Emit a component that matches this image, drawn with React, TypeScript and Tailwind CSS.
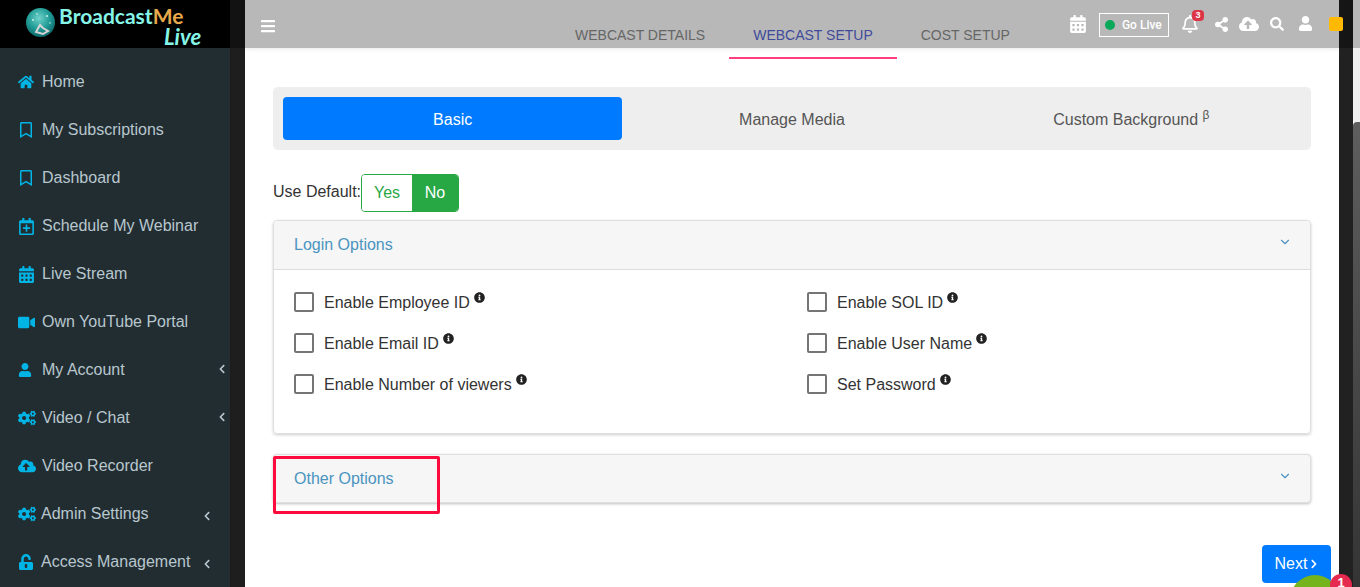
import React from "react";
import {
  FaHome, FaRegBookmark, FaRegCalendarPlus, FaCalendarAlt, FaVideo, FaUser, FaCogs,
  FaCloudUploadAlt, FaUnlockAlt, FaChevronLeft, FaInfoCircle, FaBars, FaShareAlt, FaSearch, FaRegBell, FaChevronRight,
} from "react-icons/fa";
import { FiChevronDown } from "react-icons/fi";

const menu = [
  { label: "Home", Icon: FaHome, size: 16, tx: "w-[24px]" },
  { label: "My Subscriptions", Icon: FaRegBookmark, size: 16, tx: "w-[24px]" },
  { label: "Dashboard", Icon: FaRegBookmark, size: 16, tx: "w-[24px]" },
  { label: "Schedule My Webinar", Icon: FaRegCalendarPlus, size: 17, tx: "w-[24px]" },
  { label: "Live Stream", Icon: FaCalendarAlt, size: 17, tx: "w-[24px]" },
  { label: "Own YouTube Portal", Icon: FaVideo, size: 17, tx: "w-[24px]" },
  { label: "My Account", Icon: FaUser, size: 14, tx: "w-[24px]", chev: "ml-auto mr-[3px] -mt-[3px]" },
  { label: "Video / Chat", Icon: FaCogs, size: 18, tx: "w-[24px]", chev: "ml-auto mr-[3px] -mt-[3px]" },
  { label: "Video Recorder", Icon: FaCloudUploadAlt, size: 18, tx: "w-[24px]" },
  { label: "Admin Settings", Icon: FaCogs, size: 18, tx: "w-[23px]", chev: "ml-auto mr-[18px] mt-[3px]" },
  { label: "Access Management", Icon: FaUnlockAlt, size: 16, tx: "w-[23px]", chev: "ml-auto mr-[18px] mt-[3px]" },
];

const left = ["Enable Employee ID", "Enable Email ID", "Enable Number of viewers"];
const right = ["Enable SOL ID", "Enable User Name", "Set Password"];

function Check({ label }: { label: string }) {
  return (
    <div className="flex h-[41px] items-start">
      <span className="h-5 w-5 rounded-[2px] border-2 border-[#757575] bg-white" />
      <span className="ml-[10px] mt-[1px] text-[16px] leading-[20px] text-[#333]">{label}</span>
      <FaInfoCircle size={11} className="ml-[4px] text-[#222]" />
    </div>
  );
}

function Globe() {
  return (
    <svg width="29" height="29" viewBox="0 0 29 29" className="mt-[8px] shrink-0">
      <defs>
        <radialGradient id="globe" cx="45%" cy="35%" r="70%">
          <stop offset="0%" stopColor="#6fd2cb" />
          <stop offset="55%" stopColor="#1f9a94" />
          <stop offset="100%" stopColor="#0c5f63" />
        </radialGradient>
      </defs>
      <circle cx="14.5" cy="14.5" r="14.5" fill="url(#globe)" />
      <path d="M10 24 L14 17 L17 20 L22 23 L17 26 Z" fill="none" stroke="#d8d3d6" strokeWidth="2" />
      <circle cx="7" cy="12" r="1" fill="#c9f3ee" />
      <circle cx="21" cy="8" r="1" fill="#c9f3ee" />
      <circle cx="24" cy="15" r="0.8" fill="#c9f3ee" />
      <circle cx="11" cy="6" r="0.8" fill="#c9f3ee" />
    </svg>
  );
}

export default function App() {
  return (
    <div className="relative flex h-[587px] w-[1360px] overflow-hidden bg-white font-['Liberation_Sans',Arial,sans-serif]">
      <aside className="flex h-full w-[230px] shrink-0 flex-col bg-[#222d32]">
        <div className="flex h-[48px] shrink-0 bg-black pl-[26px]">
          <Globe />
          <div className="ml-[4px] flex w-[144px] flex-col font-['Lato',sans-serif] font-bold">
            <div className="mt-[6px] h-[20px] text-[21px] leading-[20px] text-[#86f5e8]">
              Broadcast<span className="text-[#e8a94c]">Me</span>
            </div>
            <div className="ml-[105px] mt-[1px] text-[22px] italic leading-[19px] text-[#86f5e8]">Live</div>
          </div>
        </div>
        <nav className="flex flex-col pt-[10px]">
          {menu.map(({ label, Icon, size, tx, chev }) => (
            <div key={label} className="flex h-[48px] shrink-0 items-center pl-[18px] text-[16px] text-[#b8c7ce]">
              <span className={`${tx} flex shrink-0 items-center text-[#00b5e6]`}>
                <Icon size={size} />
              </span>
              <span>{label}</span>
              {chev && <FaChevronLeft size={10} className={`${chev} text-[#b8c7ce]`} />}
            </div>
          ))}
        </nav>
      </aside>

      <div className="h-full w-[15px] shrink-0 bg-[#1e1e1e]">
        <div className="h-[48px] bg-[#121212]" />
      </div>

      <main className="flex h-full w-[1094px] shrink-0 flex-col bg-white">
        <header className="flex h-[48px] shrink-0 items-center bg-[#b8b8b8] pl-[15px] shadow-[0_1px_4px_rgba(0,0,0,0.1)]">
          <FaBars size={16} className="mt-[4px] text-white" />
          <div className="ml-[275px] mt-[22px] flex text-[14px] leading-[16px] text-[#666]">
            <div className="px-[24px]">WEBCAST DETAILS</div>
            <div className="relative px-[24px] text-[#3f4b9b]">
              WEBCAST SETUP
              <div className="absolute left-0 right-0 top-[30px] h-[2px] bg-[#ff3d7f]" />
            </div>
            <div className="px-[24px]">COST SETUP</div>
          </div>
          <FaCalendarAlt size={18} className="ml-[35px] -mt-[1px] text-white" />
          <div className="ml-[12px] mt-[1px] flex h-[24px] w-[70px] items-center border border-white pl-[5px] font-['Roboto',sans-serif] text-[12px] font-medium text-white">
            <span className="h-[10px] w-[10px] rounded-full bg-[#0aa85a]" />
            <span className="ml-[7px]">Go Live</span>
          </div>
          <div className="relative ml-[12px]">
            <FaRegBell size={18} className="text-white" />
            <span className="absolute -top-[5px] left-[11px] flex h-[11px] w-[12px] items-center justify-center rounded-[4px] bg-[#dc3545] text-[9px] font-bold leading-none text-white">3</span>
          </div>
          <FaShareAlt size={15} className="ml-[15px] text-white" />
          <FaCloudUploadAlt size={20} className="ml-[10px] text-white" />
          <FaSearch size={14} className="ml-[11px] -mt-[1px] text-white" />
          <FaUser size={15} className="ml-[14px] -mt-[1px] text-white" />
        </header>

        <div className="px-[28px] pt-[39px]">
          <div className="grid h-[63px] grid-cols-3 items-center rounded-[5px] bg-[#eeeeee] px-[10px] text-[16px] text-[#555]">
            <div className="flex h-[43px] items-center justify-center rounded-[4px] bg-[#007bff] pt-[2px] text-white">Basic</div>
            <div className="pt-[2px] text-center">Manage Media</div>
            <div className="pt-[2px] text-center">
              Custom Background <sup className="text-[12px]">β</sup>
            </div>
          </div>

          <div className="mt-[24px] flex items-center text-[16px] text-[#333]">
            <span className="-mt-[2px]">Use Default:</span>
            <div className="flex h-[38px] w-[98px] overflow-hidden rounded-[4px] border border-[#28a745]">
              <div className="flex w-[50px] items-center justify-center bg-white text-[#28a745]">Yes</div>
              <div className="flex flex-1 items-center justify-center bg-[#28a745] text-white">No</div>
            </div>
          </div>

          <section className="mt-[8px] h-[214px] rounded-[4px] border border-[#dfdfdf] shadow-[0_1px_3px_rgba(0,0,0,0.2)]">
            <div className="flex h-[49px] items-center justify-between rounded-t-[4px] border-b border-[#dcdcdc] bg-[#f6f6f6] pl-[20px] pr-[18px] text-[16px] text-[#4b94c0]">
              <span>Login Options</span>
              <FiChevronDown size={14} className="-mt-[6px] text-[#4b94c0]" />
            </div>
            <div className="grid grid-cols-[513px_1fr] pl-[20px] pt-[22px]">
              <div>{left.map((l) => <Check key={l} label={l} />)}</div>
              <div>{right.map((l) => <Check key={l} label={l} />)}</div>
            </div>
          </section>

          <section className="mt-[20px] flex h-[49px] items-center justify-between rounded-[4px] border border-[#dfdfdf] bg-[#f6f6f6] pl-[20px] pr-[18px] text-[16px] text-[#4b94c0] shadow-[0_1px_3px_rgba(0,0,0,0.25)]">
            <span>Other Options</span>
            <FiChevronDown size={14} className="-mt-[6px] text-[#4b94c0]" />
          </section>

          <div className="mr-[-20px] mt-[42px] flex justify-end">
            <div className="flex h-[38px] w-[69px] items-center justify-center gap-[2px] rounded-[4px] bg-[#007bff] pl-[1px] text-[16px] text-white">
              Next <FaChevronRight size={10} />
            </div>
          </div>
        </div>
      </main>

      <div className="h-full w-[14px] shrink-0 bg-[#212121]">
        <div className="h-[48px] bg-[#151515]" />
      </div>
      <div className="h-full flex-1">
        <div className="h-[48px] bg-[#b8b8b8]" />
        <div className="h-[74px] bg-[#f1f1f1]" />
        <div className="h-[465px] rounded-tl-[4px] bg-[linear-gradient(#5e5e5e,#343434)]" />
      </div>

      {/* overlays */}
      <div className="absolute left-[1329px] top-[17px] h-[14px] w-[14px] rounded-[2px] bg-[#ffb900]" />
      <div className="absolute left-[273px] top-[456px] h-[58px] w-[167px] rounded-[2px] border-[3px] border-[#ff0a3c]" />
      <div className="absolute left-[1290px] top-[575px] h-[50px] w-[50px] rounded-full bg-[#76b41e]" />
      <div className="absolute left-[1330px] top-[574px] flex h-[22px] w-[22px] items-start justify-center rounded-full bg-[#e5294f] pt-[2px] text-[13px] font-bold leading-none text-white">1</div>
    </div>
  );
}
